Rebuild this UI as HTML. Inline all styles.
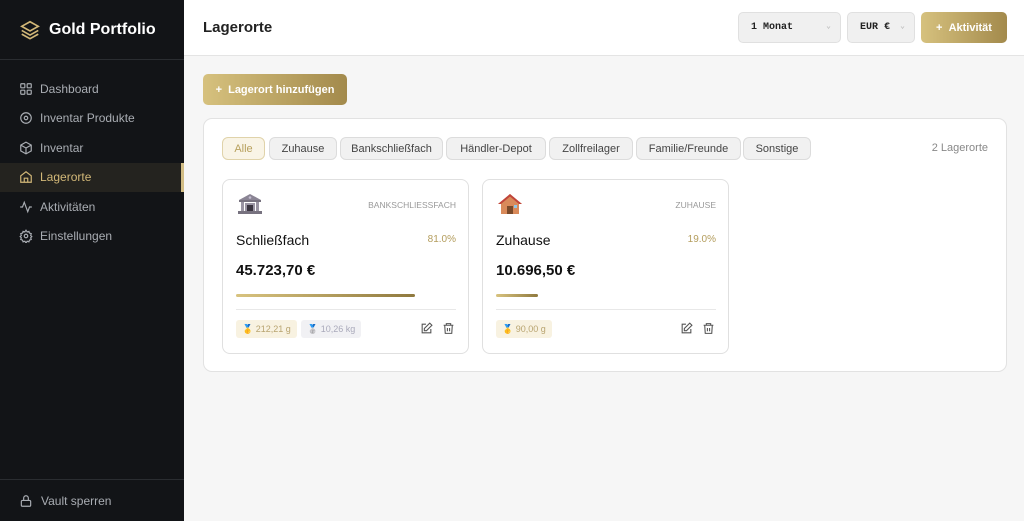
<!DOCTYPE html>
<html><head><meta charset="utf-8"><style>
*{box-sizing:border-box;margin:0;padding:0}
body{width:1024px;height:521px;overflow:hidden;font-family:"Liberation Sans","Noto Sans CJK SC",sans-serif;background:#f6f6f6;position:relative}
.sb{position:absolute;left:0;top:0;width:184px;height:521px;background:#121417;color:#a9adb3}
.logo{height:60px;border-bottom:1px solid #2a2d31;display:flex;align-items:center;padding-left:19px;color:#fff;font-weight:bold;font-size:16px}
.logo svg{margin-right:8px}
.nav{margin-top:14px}
.it{height:29.5px;display:flex;align-items:center;padding-left:19px;font-size:12px}
.it svg{margin-right:7px}
.it.a{background:#24231f;color:#d2b878;border-right:3px solid #d2bd85}
.lock{position:absolute;bottom:0;left:0;width:184px;height:42px;border-top:1px solid #2a2d31;display:flex;align-items:center;padding-left:19px;font-size:12px}
.lock svg{margin-right:8px}
.top{position:absolute;left:184px;top:0;right:0;height:56px;background:#fff;border-bottom:1px solid #e4e4e4}
.top h1{position:absolute;left:19px;top:19px;font-size:15px;color:#222}
.sel{position:absolute;top:12px;height:31px;background:#f0f0f0;border:1px solid #e0e0e0;border-radius:5px;font-family:"Liberation Mono",monospace;font-weight:bold;font-size:10px;color:#222;display:flex;align-items:center;padding-left:12px}
.sel i{position:absolute;right:9px;top:8px;color:#bbb;font-style:normal;font-size:8px}
.gold{background:linear-gradient(90deg,#d6c17e,#a38a4c);color:#fff;font-weight:bold;border-radius:5px;display:flex;align-items:center;justify-content:center;font-size:11px}
.panel{position:absolute;left:203px;top:118px;width:804px;height:254px;background:#fff;border:1px solid #e2e2e2;border-radius:9px}
.chip{position:absolute;top:18px;height:23px;border:1px solid #dcdcdc;background:#f1f1f1;border-radius:6px;font-size:11px;color:#444;display:flex;align-items:center;justify-content:center}
.card{position:absolute;top:60px;width:247px;height:175px;border:1px solid #e0e0e0;border-radius:8px;background:#fff}
.card .ty{position:absolute;right:12px;top:20px;font-size:8.5px;color:#999}
.card .nm{position:absolute;left:13px;top:52px;font-size:14px;color:#111}
.card .pc{position:absolute;right:12px;top:54px;font-size:10px;color:#b49d5d}
.card .v{position:absolute;left:13px;top:82px;font-size:15px;font-weight:bold;color:#111}
.card .bar{position:absolute;left:13px;top:114px;height:3px;background:linear-gradient(90deg,#d8c37f,#8f793e);border-radius:2px}
.card .ln{position:absolute;left:13px;right:12px;top:129px;border-top:1px solid #e8e8e8}
.tag{position:absolute;top:140px;height:18px;border-radius:3px;font-size:9px;display:flex;align-items:center;padding:0 6px;color:#b8a470;background:#f8f2e1}
.ic{position:absolute;top:142px}
.em{position:absolute;left:14px;top:12px;font-size:19px;line-height:24px}
</style></head><body>
<div class="sb">
<div class="logo"><svg width="22" height="22" viewBox="0 0 24 24" fill="none" stroke="#d2b878" stroke-width="1.8"><path d="M12 3 3 8l9 5 9-5z"/><path d="M3 12.5l9 5 9-5"/><path d="M3 16.5l9 5 9-5"/></svg>Gold Portfolio</div>
<div class="nav">
<div class="it"><svg width="14" height="14" viewBox="0 0 24 24" fill="none" stroke="#a9adb3" stroke-width="2"><rect x="3" y="3" width="7" height="7" rx="1"/><rect x="14" y="3" width="7" height="7" rx="1"/><rect x="3" y="14" width="7" height="7" rx="1"/><rect x="14" y="14" width="7" height="7" rx="1"/></svg>Dashboard</div>
<div class="it"><svg width="14" height="14" viewBox="0 0 24 24" fill="none" stroke="#a9adb3" stroke-width="2"><circle cx="12" cy="12" r="9"/><circle cx="12" cy="12" r="3"/></svg>Inventar Produkte</div>
<div class="it"><svg width="14" height="14" viewBox="0 0 24 24" fill="none" stroke="#a9adb3" stroke-width="2"><path d="M12 2 3 7v10l9 5 9-5V7z"/><path d="M3 7l9 5 9-5M12 12v10"/></svg>Inventar</div>
<div class="it a"><svg width="14" height="14" viewBox="0 0 24 24" fill="none" stroke="#d2b878" stroke-width="2"><path d="M3 10l9-7 9 7v11H3z"/><path d="M9 21v-7h6v7"/></svg>Lagerorte</div>
<div class="it"><svg width="14" height="14" viewBox="0 0 24 24" fill="none" stroke="#a9adb3" stroke-width="2"><path d="M2 12h4l3-8 6 16 3-8h4"/></svg>Aktivitäten</div>
<div class="it"><svg width="14" height="14" viewBox="0 0 24 24" fill="none" stroke="#a9adb3" stroke-width="2"><circle cx="12" cy="12" r="3"/><path d="M12 2l2 3 3-1 1 3 3 1-1 3 2 2-2 2 1 3-3 1-1 3-3-1-2 3-2-3-3 1-1-3-3-1 1-3-2-2 2-2-1-3 3-1 1-3 3 1z"/></svg>Einstellungen</div>
</div>
<div class="lock"><svg width="14" height="14" viewBox="0 0 24 24" fill="none" stroke="#a9adb3" stroke-width="2"><rect x="4" y="11" width="16" height="10" rx="2"/><path d="M8 11V7a4 4 0 0 1 8 0v4"/></svg>Vault sperren</div>
</div>
<div class="top"><h1>Lagerorte</h1>
<div class="sel" style="left:554px;width:103px">1 Monat<i>⌄</i></div>
<div class="sel" style="left:663px;width:68px">EUR €<i>⌄</i></div>
<div class="gold" style="position:absolute;left:737px;top:12px;width:86px;height:31px">+&nbsp;&nbsp;Aktivität</div>
</div>
<div class="gold" style="position:absolute;left:203px;top:74px;width:144px;height:31px">+&nbsp;&nbsp;Lagerort hinzufügen</div>
<div class="panel">
<div class="chip" style="left:18px;width:43px;background:#f9f4e6;border-color:#e0d3aa;color:#b8a15e">Alle</div>
<div class="chip" style="left:65px;width:68px">Zuhause</div>
<div class="chip" style="left:136px;width:103px">Bankschließfach</div>
<div class="chip" style="left:242px;width:100px">Händler-Depot</div>
<div class="chip" style="left:345px;width:84px">Zollfreilager</div>
<div class="chip" style="left:432px;width:105px">Familie/Freunde</div>
<div class="chip" style="left:539px;width:68px">Sonstige</div>
<div style="position:absolute;right:18px;top:23px;font-size:11px;color:#888">2 Lagerorte</div>
<div class="card" style="left:18px">
<svg class="em" width="26" height="24" viewBox="0 0 26 24"><path d="M13 2 2 8h22z" fill="#8a8494"/><rect x="2" y="8" width="22" height="2" fill="#77727f"/><rect x="4" y="10" width="3" height="9" fill="#9a95a3"/><rect x="19" y="10" width="3" height="9" fill="#9a95a3"/><rect x="8" y="11" width="10" height="8" fill="#9a95a3"/><rect x="10" y="13" width="6" height="6" fill="#3a3540"/><rect x="1" y="19" width="24" height="3" fill="#77727f"/><circle cx="13" cy="5.5" r="1.3" fill="#c4bdd0"/></svg>
<div class="ty">BANKSCHLIESSFACH</div><div class="nm">Schließfach</div><div class="pc">81.0%</div>
<div class="v">45.723,70 €</div><div class="bar" style="width:179px"></div><div class="ln"></div>
<div class="tag" style="left:13px">🥇 212,21 g</div><div class="tag" style="left:78px;background:#f1f1f4;color:#aab">🥈 10,26 kg</div>
<svg class="ic" style="left:197px" width="13" height="13" viewBox="0 0 24 24" fill="none" stroke="#555" stroke-width="2"><path d="M11 4H4v16h16v-7"/><path d="M18 2l4 4-10 10H8v-4z"/></svg>
<svg class="ic" style="left:219px" width="13" height="13" viewBox="0 0 24 24" fill="none" stroke="#555" stroke-width="2"><path d="M3 6h18M8 6V3h8v3M5 6l1 15h12l1-15"/><path d="M10 11v6M14 11v6"/></svg>
</div>
<div class="card" style="left:278px">
<svg class="em" width="26" height="24" viewBox="0 0 26 24"><path d="M13 2 1 12h3v10h18V12h3z" fill="#d98a5a"/><path d="M13 2 1 12h3L13 4.5 22 12h3z" fill="#c0443a"/><rect x="10" y="14" width="6" height="8" fill="#7a4a2a"/><rect x="17" y="13" width="3" height="3" fill="#8fc7e8"/></svg>
<div class="ty">ZUHAUSE</div><div class="nm">Zuhause</div><div class="pc">19.0%</div>
<div class="v">10.696,50 €</div><div class="bar" style="width:42px"></div><div class="ln"></div>
<div class="tag" style="left:13px">🥇 90,00 g</div>
<svg class="ic" style="left:197px" width="13" height="13" viewBox="0 0 24 24" fill="none" stroke="#555" stroke-width="2"><path d="M11 4H4v16h16v-7"/><path d="M18 2l4 4-10 10H8v-4z"/></svg>
<svg class="ic" style="left:219px" width="13" height="13" viewBox="0 0 24 24" fill="none" stroke="#555" stroke-width="2"><path d="M3 6h18M8 6V3h8v3M5 6l1 15h12l1-15"/><path d="M10 11v6M14 11v6"/></svg>
</div>
</div>
</body></html>
